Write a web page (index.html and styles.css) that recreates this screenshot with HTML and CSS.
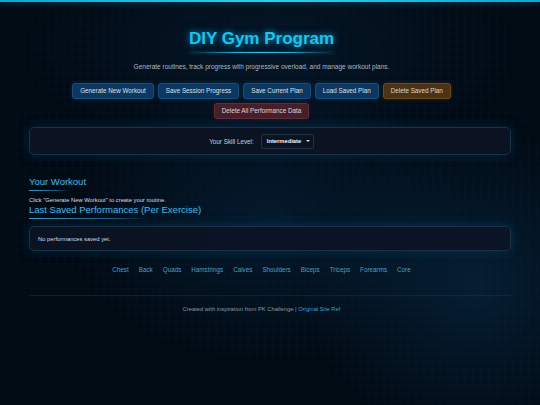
FILE: index.html
```html
<!DOCTYPE html>
<html lang="en">
<head>
<meta charset="utf-8">
<title>DIY Gym Program</title>
<link rel="stylesheet" href="styles.css">
</head>
<body>
<div class="topbar"></div>
<div class="page">
  <header class="hero">
    <h1 class="title">DIY Gym Program</h1>
    <p class="subtitle">Generate routines, track progress with progressive overload, and manage workout plans.</p>
    <div class="actions">
      <button class="btn">Generate New Workout</button>
      <button class="btn">Save Session Progress</button>
      <button class="btn">Save Current Plan</button>
      <button class="btn">Load Saved Plan</button>
      <button class="btn btn-warn">Delete Saved Plan</button>
      <button class="btn btn-danger">Delete All Performance Data</button>
    </div>
  </header>

  <section class="card skill">
    <label class="skill-label">Your Skill Level:</label>
    <div class="select">Intermediate <span class="caret"></span></div>
  </section>

  <section class="workout">
    <h2 class="section-title">Your Workout</h2>
    <p class="hint">Click "Generate New Workout" to create your routine.</p>
  </section>

  <section class="perf">
    <h2 class="section-title">Last Saved Performances (Per Exercise)</h2>
    <div class="card perf-card">No performances saved yet.</div>
  </section>

  <nav class="muscles">
    <a>Chest</a><a>Back</a><a>Quads</a><a>Hamstrings</a><a>Calves</a><a>Shoulders</a><a>Biceps</a><a>Triceps</a><a>Forearms</a><a>Core</a>
  </nav>

  <footer class="footer">
    Created with inspiration from PK Challenge | <a class="footer-link">Original Site Ref</a>
  </footer>
</div>
</body>
</html>
```

FILE: styles.css
```css
* { box-sizing: border-box; }
html, body { height: 100%; }
body {
  margin: 0;
  font-family: "Liberation Sans", Arial, sans-serif;
  color: #d4dbe3;
  background-color: #020a14;
  background-image:
    radial-gradient(ellipse 45% 55% at 88% 70%, rgba(10, 60, 95, 0.4), transparent 70%),
    radial-gradient(ellipse 50% 45% at 50% 55%, rgba(8, 45, 75, 0.45), transparent 75%),
    radial-gradient(ellipse 60% 40% at 50% 12%, rgba(8, 38, 64, 0.4), transparent 75%),
    linear-gradient(rgba(40, 90, 130, 0.04) 1px, transparent 1px),
    linear-gradient(90deg, rgba(40, 90, 130, 0.04) 1px, transparent 1px);
  background-size: auto, auto, auto, 8px 8px, 8px 8px;
  overflow: hidden;
}
.topbar {
  height: 2px;
  background: linear-gradient(90deg, #0aa6d8, #2ccdf2, #0aa6d8);
  box-shadow: 0 0 6px rgba(40, 200, 240, 0.6);
}
.page {
  width: 482px;
  margin: 0 auto;
  padding-top: 27px;
}
.hero {
  text-align: center;
  padding-right: 17px;
}
.title {
  margin: 0;
  font-size: 17px;
  line-height: 20px;
  font-weight: bold;
  color: #1fc2ec;
  text-shadow: 0 0 6px rgba(30, 190, 240, 0.7), 0 0 12px rgba(30, 170, 230, 0.3);
}
.title::after {
  content: "";
  display: block;
  width: 145px;
  height: 1px;
  margin: 3px auto 0;
  background: linear-gradient(90deg, transparent, #2aa8d8 30%, #3cc0ea 50%, #2aa8d8 70%, transparent);
  box-shadow: 0 0 3px rgba(40, 180, 230, 0.6);
}
.subtitle {
  margin: 9px 0 0;
  font-size: 6.5px;
  line-height: 9px;
  color: #aeb8c3;
}
.actions {
  margin: 12px auto 0;
  display: flex;
  flex-wrap: wrap;
  justify-content: center;
  gap: 4px;
  width: 400px;
}
.btn {
  font-family: inherit;
  font-size: 6.3px;
  line-height: 8px;
  height: 16px;
  padding: 3px 7px;
  color: #d8e2ec;
  background: #0b3760;
  border: 1px solid #174d7c;
  border-radius: 3px;
  box-shadow: 0 0 4px rgba(20, 100, 170, 0.35);
}
.btn-warn {
  background: #4a3316;
  border-color: #6a4b1f;
  color: #e4d8c4;
  box-shadow: 0 0 4px rgba(150, 100, 30, 0.3);
}
.btn-danger {
  background: #45202b;
  border-color: #5f2c38;
  color: #e4d2d6;
  box-shadow: 0 0 4px rgba(150, 40, 60, 0.25);
}
.card {
  background: rgba(12, 20, 36, 0.92);
  border: 1px solid #183247;
  border-radius: 5px;
  box-shadow: 0 0 12px rgba(10, 110, 170, 0.28);
}
.skill {
  margin-top: 8px;
  height: 28px;
  display: flex;
  align-items: center;
  justify-content: center;
  gap: 7px;
  padding-right: 17px;
  font-size: 6.3px;
}
.skill-label { color: #c5ced8; }
.select {
  height: 15px;
  width: 53px;
  display: flex;
  align-items: center;
  padding: 0 5px;
  background: #0a1322;
  border: 1px solid #1e3246;
  border-radius: 2px;
  color: #f0f4f8;
  font-size: 5.8px;
  font-weight: bold;
}
.caret {
  margin-left: 5px;
  width: 0;
  height: 0;
  border-left: 2px solid transparent;
  border-right: 2px solid transparent;
  border-top: 2px solid #d8e0e8;
}
.workout { margin-top: 21px; }
.section-title {
  display: block;
  width: fit-content;
  margin: 0;
  font-size: 9.5px;
  line-height: 12px;
  font-weight: normal;
  color: #4fb0e0;
  text-shadow: 0 0 4px rgba(40, 160, 220, 0.3);
}
.section-title::after {
  content: "";
  display: block;
  height: 1px;
  margin-top: 2px;
  background: linear-gradient(90deg, #3a9ccc, rgba(58, 156, 204, 0.5) 50%, transparent 70%);
}
.hint {
  margin: 5px 0 0;
  font-size: 5.8px;
  line-height: 8px;
  color: #d6dde5;
}
.perf-card {
  margin-top: 7px;
  height: 25px;
  display: flex;
  align-items: center;
  padding: 0 8px;
  font-size: 5.8px;
  color: #d6dde5;
}
.muscles {
  margin-top: 15px;
  display: flex;
  justify-content: center;
  gap: 10px;
  padding-right: 17px;
  font-size: 6.3px;
  line-height: 8px;
}
.muscles a { color: #4a9fcc; }
.footer {
  margin-top: 21px;
  padding-top: 9px;
  padding-right: 17px;
  border-top: 1px solid rgba(30, 70, 100, 0.35);
  text-align: center;
  font-size: 5.8px;
  line-height: 8px;
  color: #8f9aa5;
}
.footer-link { color: #37a2d4; }
```
